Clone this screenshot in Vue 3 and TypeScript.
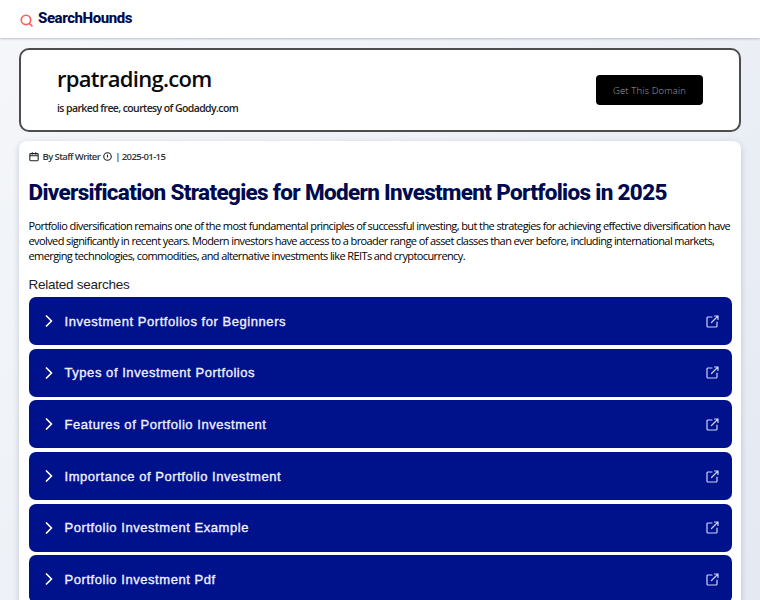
<template>
  <div class="page">
    <header class="topbar">
      <svg class="logo-icon" width="13" height="13" viewBox="0 0 24 24" fill="none" stroke="#ff5a5f" stroke-width="3" stroke-linecap="round">
        <circle cx="11" cy="11" r="8.600" />
        <path d="M17.500 17.500 22 22" />
      </svg>
      <span class="logo-text">SearchHounds</span>
    </header>

    <main class="content">
      <section class="banner">
        <div>
          <div class="domain">rpatrading.com</div>
          <div class="courtesy">is parked free, courtesy of Godaddy.com</div>
        </div>
        <button class="buy">Get This Domain</button>
      </section>

      <article class="card">
        <div class="meta">
          <svg class="calendar" width="10" height="11" viewBox="0 0 24 24" fill="none" stroke="#222" stroke-width="2.600">
            <rect x="2" y="5" width="20" height="17" rx="2" />
            <path d="M2 10h20M8 2v5M16 2v5" />
          </svg>
          <span class="author">By Staff Writer</span>
          <svg width="9" height="9" viewBox="0 0 24 24" fill="none" stroke="#222" stroke-width="3">
            <circle cx="12" cy="12" r="10" />
            <path d="M12 7v6h-1" />
          </svg>
          <span class="date">| 2025-01-15</span>
        </div>

        <h1>Diversification Strategies for Modern Investment Portfolios in 2025</h1>

        <p class="intro">
          Portfolio diversification remains one of the most fundamental principles of successful investing, but the strategies for achieving effective diversification have evolved significantly in recent years. Modern investors have access to a broader range of asset classes than ever before, including international markets, emerging technologies, commodities, and alternative investments like REITs and cryptocurrency.
        </p>

        <h2>Related searches</h2>

        <div class="links">
          <a v-for="item in searches" :key="item" class="link" href="#">
            <svg class="chevron" width="8" height="12" viewBox="0 0 8 12" fill="none" stroke="#fff" stroke-width="1.700" stroke-linecap="round" stroke-linejoin="round">
              <path d="M1.500 1 6.500 6l-5 5" />
            </svg>
            <span class="label">{{ item }}</span>
            <svg class="external" width="13" height="13" viewBox="0 0 13 13" fill="none" stroke="#cdd4fa" stroke-width="1.200" stroke-linecap="round" stroke-linejoin="round">
              <path d="M6 2H2A1 1 0 0 0 1 3V11A1 1 0 0 0 2 12H10A1 1 0 0 0 11 11V7" />
              <path d="M5.500 7.500 12 1M8.500 1H12V4.500" />
            </svg>
          </a>
        </div>
      </article>
    </main>
  </div>
</template>

<script setup lang="ts">
const searches: string[] = [
  'Investment Portfolios for Beginners',
  'Types of Investment Portfolios',
  'Features of Portfolio Investment',
  'Importance of Portfolio Investment',
  'Portfolio Investment Example',
  'Portfolio Investment Pdf'
]
</script>

<style>
html,
body {
  margin: 0;
  height: 600px;
  overflow: hidden;
}
</style>

<style scoped>
.page {
  height: 600px;
  overflow: hidden;
  background: linear-gradient(135deg, #f5f7fa 0%, #e4e9f2 100%);
  font-family: "Open Sans", sans-serif;
  color: #111;
}

.topbar {
  display: flex;
  align-items: center;
  gap: 5px;
  height: 38px;
  padding-left: 20px;
  background: #fff;
  box-shadow: 0 1px 2px rgba(60, 80, 120, 0.35);
}

.logo-icon {
  margin-top: 3px;
}

.logo-text {
  font-family: Roboto, sans-serif;
  font-weight: 800;
  font-size: 15px;
  letter-spacing: -0.42px;
  color: #000a4f;
  margin-top: -3px;
}

.content {
  padding: 10px 19px 0;
}

.banner {
  display: flex;
  justify-content: space-between;
  align-items: center;
  box-sizing: border-box;
  height: 84px;
  padding: 0 36px;
  background: #fff;
  border: 2px solid #4d4d4d;
  border-radius: 10px;
}

.banner > div {
  margin-top: -2px;
}

.domain {
  font-size: 22px;
  font-weight: 600;
  letter-spacing: -0.7px;
  line-height: 30px;
  color: #0a0a0a;
}

.courtesy {
  margin-top: 7px;
  font-size: 10.5px;
  font-weight: 600;
  letter-spacing: -0.6px;
  line-height: 16px;
  color: #222;
}

.buy {
  width: 107px;
  height: 30px;
  padding: 0;
  background: #000;
  border: none;
  border-radius: 4px;
  color: #a0a0a0;
  font-family: "Open Sans", sans-serif;
  font-weight: 300;
  font-size: 9.5px;
  letter-spacing: 0.15px;
}

.card {
  margin-top: 9px;
  padding: 9px 9.5px 10px;
  background: #fff;
  border-radius: 8px;
  box-shadow: 0 2px 6px rgba(60, 80, 120, 0.25);
}

.meta {
  display: flex;
  align-items: center;
  gap: 3px;
  height: 12px;
  font-size: 9.5px;
  font-weight: 600;
  letter-spacing: -0.6px;
  color: #333;
}

.calendar {
  margin-right: 1px;
}

h1 {
  margin: 15px 0 0;
  font-family: Roboto, sans-serif;
  font-size: 22.5px;
  font-weight: 800;
  letter-spacing: -0.68px;
  line-height: 30px;
  color: #000a4f;
  white-space: nowrap;
}

.intro {
  margin: 11px 0 0;
  font-size: 11px;
  font-weight: 500;
  letter-spacing: -0.6px;
  line-height: 15px;
  color: #000;
}

h2 {
  margin: 13px 0 0;
  font-family: "Liberation Sans", sans-serif;
  font-size: 13.5px;
  font-weight: 400;
  letter-spacing: -0.25px;
  line-height: 18px;
  color: #222;
}

.links {
  display: flex;
  flex-direction: column;
  gap: 3.7px;
  margin-top: 3px;
}

.link {
  display: flex;
  align-items: center;
  flex-shrink: 0;
  height: 48px;
  padding: 0 13px 0 16px;
  background: #00118c;
  border-radius: 7px;
  text-decoration: none;
}

.label {
  flex: 1;
  margin-left: 12px;
  font-family: "Liberation Sans", sans-serif;
  font-size: 13px;
  font-weight: 400;
  letter-spacing: 0.55px;
  -webkit-text-stroke: 0.35px #eef0ff;
  color: #eef0ff;
}
</style>
